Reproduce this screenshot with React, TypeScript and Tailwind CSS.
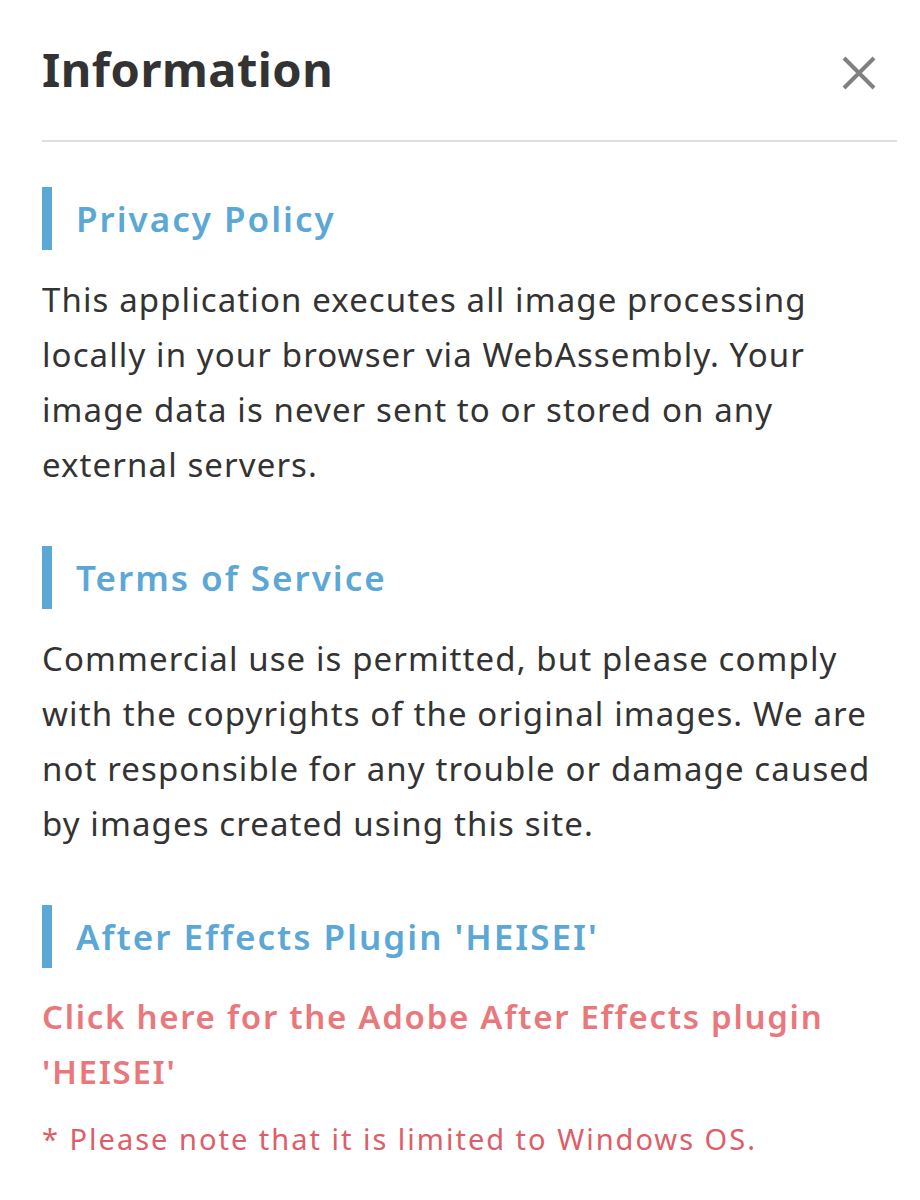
import React from "react";

const font = { fontFamily: '"Noto Sans", "Open Sans", sans-serif' };

function Heading({ children }: { children: React.ReactNode }) {
  return (
    <div className="flex items-center h-[63px]">
      <div className="w-[10px] h-[63px] bg-[#5ba7d5]" />
      <h2 className="pl-[24px] text-[35px] tracking-[2px] font-semibold text-[#5ba7d5] leading-none">{children}</h2>
    </div>
  );
}

export default function App() {
  return (
    <div className="bg-white w-[920px] h-[1200px] pl-[42px] pr-[23px]" style={font}>
      <div className="flex items-center justify-between h-[142px] border-b-2 border-[#dedfe3]">
        <h1 className="text-[47px] tracking-[0.5px] font-bold text-[#333333] leading-none -mt-[2px]">Information</h1>
        <svg width="34" height="34" viewBox="0 0 34 34" className="mr-[21px] mt-[6px]">
          <path d="M2 2 L32 32 M32 2 L2 32" stroke="#808080" strokeWidth="4" />
        </svg>
      </div>

      <div className="mt-[45px]">
        <Heading>Privacy Policy</Heading>
        <p className="mt-[22px] text-[33px] tracking-[1.1px] leading-[55px] text-[#333333] whitespace-nowrap">
          This application executes all image processing<br />
          locally in your browser via WebAssembly. Your<br />
          image data is never sent to or stored on any<br />
          external servers.
        </p>
      </div>

      <div className="mt-[54px]">
        <Heading>Terms of Service</Heading>
        <p className="mt-[22px] text-[33px] tracking-[1.1px] leading-[55px] text-[#333333] whitespace-nowrap">
          Commercial use is permitted, but please comply<br />
          with the copyrights of the original images. We are<br />
          not responsible for any trouble or damage caused<br />
          by images created using this site.
        </p>
      </div>

      <div className="mt-[54px]">
        <Heading>After Effects Plugin 'HEISEI'</Heading>
        <a className="block mt-[21px] text-[33px] tracking-[1.7px] leading-[55px] font-semibold text-[#ea777b] whitespace-nowrap">
          Click here for the Adobe After Effects plugin<br />
          'HEISEI'
        </a>
        <p className="mt-[20px] text-[29px] tracking-[2px] leading-[40px] text-[#dd5e68] whitespace-nowrap">
          * Please note that it is limited to Windows OS.
        </p>
      </div>
    </div>
  );
}
